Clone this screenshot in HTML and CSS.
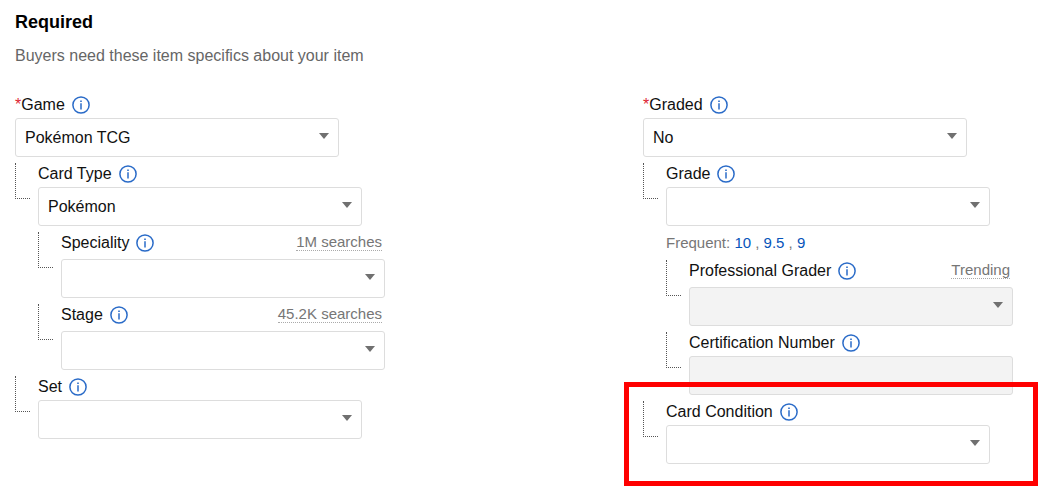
FILE: index.html
```html
<!DOCTYPE html>
<html lang="en">

<head>
    <meta charset="UTF-8">
    <meta name="viewport" content="width=device-width, initial-scale=1.0">
    <title>Item specifics</title>
    <link rel="stylesheet" href="styles.css">
</head>

<body>
    <!-- info icon, reused by every label -->
    <svg class="sprite" aria-hidden="true">
        <symbol id="info" viewBox="0 0 18 18">
            <circle cx="9" cy="9" r="8.1" fill="none" stroke="currentColor" stroke-width="1.5" />
            <path d="M9 7.2v6.3" fill="none" stroke="currentColor" stroke-width="1.5" />
            <path d="M9 4.4v1.6" fill="none" stroke="currentColor" stroke-width="1.6" />
        </symbol>
    </svg>

    <form class="specifics">
        <h2>Required</h2>
        <p class="hint">Buyers need these item specifics about your item</p>

        <div class="columns">
            <div class="column">
                <div class="field">
                    <div class="label-row">
                        <label for="game"><span class="star">*</span>Game</label>
                        <button type="button" class="info-btn" aria-label="About Game"><svg><use href="#info" /></svg></button>
                    </div>
                    <select id="game" name="game" required>
                        <option>Pokémon TCG</option>
                    </select>
                </div>

                <div class="branch">
                    <div class="branch-body">
                        <div class="field">
                            <div class="label-row">
                                <label for="card-type">Card Type</label>
                                <button type="button" class="info-btn" aria-label="About Card Type"><svg><use href="#info" /></svg></button>
                            </div>
                            <select id="card-type" name="card-type">
                                <option>Pokémon</option>
                            </select>
                        </div>

                        <div class="branch">
                            <div class="field">
                                <div class="label-row">
                                    <label for="speciality">Speciality</label>
                                    <button type="button" class="info-btn" aria-label="About Speciality"><svg><use href="#info" /></svg></button>
                                    <span class="badge">1M searches</span>
                                </div>
                                <select id="speciality" name="speciality">
                                    <option></option>
                                </select>
                            </div>
                        </div>

                        <div class="branch">
                            <div class="field">
                                <div class="label-row">
                                    <label for="stage">Stage</label>
                                    <button type="button" class="info-btn" aria-label="About Stage"><svg><use href="#info" /></svg></button>
                                    <span class="badge">45.2K searches</span>
                                </div>
                                <select id="stage" name="stage">
                                    <option></option>
                                </select>
                            </div>
                        </div>
                    </div>
                </div>

                <div class="branch">
                    <div class="field">
                        <div class="label-row">
                            <label for="set">Set</label>
                            <button type="button" class="info-btn" aria-label="About Set"><svg><use href="#info" /></svg></button>
                        </div>
                        <select id="set" name="set">
                            <option></option>
                        </select>
                    </div>
                </div>
            </div>

            <div class="column">
                <div class="field">
                    <div class="label-row">
                        <label for="graded"><span class="star">*</span>Graded</label>
                        <button type="button" class="info-btn" aria-label="About Graded"><svg><use href="#info" /></svg></button>
                    </div>
                    <select id="graded" name="graded" required>
                        <option>No</option>
                    </select>
                </div>

                <div class="branch">
                    <div class="branch-body">
                        <div class="field">
                            <div class="label-row">
                                <label for="grade">Grade</label>
                                <button type="button" class="info-btn" aria-label="About Grade"><svg><use href="#info" /></svg></button>
                            </div>
                            <select id="grade" name="grade">
                                <option></option>
                            </select>
                        </div>
                        <p class="frequent">Frequent: <a href="#grade">10</a> , <a href="#grade">9.5</a> , <a href="#grade">9</a></p>

                        <div class="branch">
                            <div class="field">
                                <div class="label-row">
                                    <label for="grader">Professional Grader</label>
                                    <button type="button" class="info-btn" aria-label="About Professional Grader"><svg><use href="#info" /></svg></button>
                                    <span class="badge">Trending</span>
                                </div>
                                <select id="grader" name="grader" disabled>
                                    <option></option>
                                </select>
                            </div>
                        </div>

                        <div class="branch">
                            <div class="field">
                                <div class="label-row">
                                    <label for="certification">Certification Number</label>
                                    <button type="button" class="info-btn" aria-label="About Certification Number"><svg><use href="#info" /></svg></button>
                                </div>
                                <input type="text" id="certification" name="certification" disabled>
                            </div>
                        </div>
                    </div>
                </div>

                <div class="branch highlight">
                    <div class="field">
                        <div class="label-row">
                            <label for="condition">Card Condition</label>
                            <button type="button" class="info-btn" aria-label="About Card Condition"><svg><use href="#info" /></svg></button>
                        </div>
                        <select id="condition" name="condition">
                            <option></option>
                        </select>
                    </div>
                </div>
            </div>
        </div>
    </form>
</body>

</html>
```

FILE: styles.css
```css
*,
*::before,
*::after {
    box-sizing: border-box;
}

body {
    font-family: "Liberation Sans", Arial, sans-serif;
    font-size: 16px;
    line-height: 20px;
    background-color: #fff;
    color: #111;
    margin: 0;
}

.sprite {
    display: none;
}

.specifics {
    padding: 12px 41px 32px 15px;
}

h2 {
    font-size: 18px;
    line-height: 20px;
    color: #000;
    margin: 0 0 14px;
}

.hint {
    color: #666;
    margin: 0 0 22px;
}

.columns {
    display: flex;
    flex-wrap: wrap;
    justify-content: space-between;
}

.column {
    width: 370px;
    max-width: 100%;
}

.field {
    width: 324px;
    max-width: 100%;
}

/* label, info button and the optional search badge */
.label-row {
    display: flex;
    align-items: flex-start;
    padding-top: 7px;
}

.label-row label {
    margin-bottom: 3px;
}

.star {
    color: #dd1e31;
}

.info-btn {
    width: 18px;
    height: 18px;
    margin: 1px 0 0 7px;
    padding: 0;
    border: none;
    background: none;
    color: #2a6bc8;
    cursor: pointer;
}

.info-btn svg {
    display: block;
    width: 18px;
    height: 18px;
}

.badge {
    margin: 0 3px 8px auto;
    border-bottom: 1px dotted #aaa;
    color: #767676;
    font-size: 15px;
    line-height: 17px;
}

select,
input[type="text"] {
    display: block;
    width: 100%;
    height: 39px;
    padding: 0 30px 0 9px;
    border: 1px solid #ddd;
    border-radius: 3px;
    background-color: #fff;
    color: #111;
    font-family: inherit;
    font-size: 16px;
}

select {
    appearance: none;
    background-image: url("data:image/svg+xml,%3Csvg xmlns='http://www.w3.org/2000/svg' width='10' height='6'%3E%3Cpath d='M0 0h10L5 6z' fill='%23707070'/%3E%3C/svg%3E");
    background-repeat: no-repeat;
    background-position: right 9px top 14px;
}

select:disabled,
input[type="text"]:disabled {
    background-color: #f3f3f3;
    opacity: 1;
}

/* dotted elbow that ties a field to its parent */
.branch {
    display: flex;
}

.branch::before {
    content: "";
    flex: none;
    width: 15px;
    height: 36px;
    margin: 6px 8px 0 0;
    border-left: 1px dotted #555;
    border-bottom: 1px dotted #555;
}

.branch-body {
    flex: 1;
    min-width: 0;
}

.frequent {
    margin: 0;
    padding: 7px 0 1px;
    color: #767676;
    font-size: 15px;
}

.frequent a {
    color: #0654ba;
    text-decoration: none;
}

.highlight {
    position: relative;
}

/* red frame drawn round the condition field */
.highlight::after {
    content: "";
    position: absolute;
    top: -13px;
    right: -25px;
    bottom: -22px;
    left: -19px;
    border: 5px solid #f00;
    pointer-events: none;
}
```
